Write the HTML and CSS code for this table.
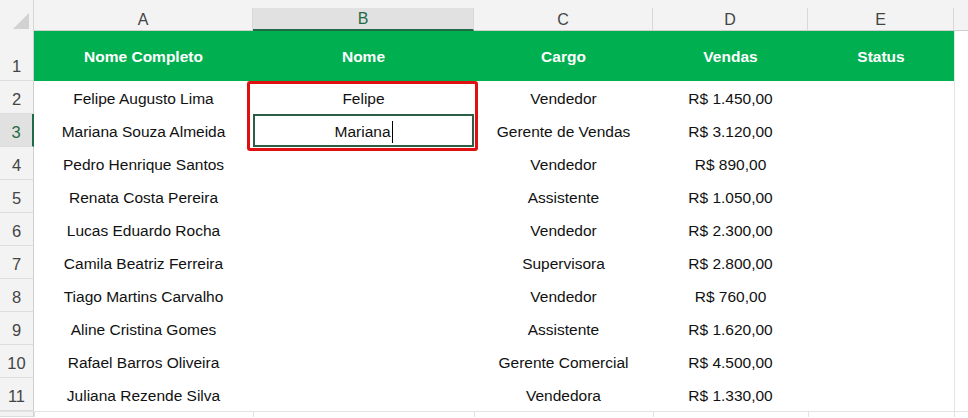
FILE: index.html
```html
<!DOCTYPE html>
<html lang="pt-BR">
<head>
<meta charset="utf-8">
<title>Planilha</title>
<link rel="stylesheet" href="styles.css">
</head>
<body>
<div class="sheet">
  <div class="row colhead">
    <div class="corner"><span class="tri"></span></div>
    <div class="ch">A</div>
    <div class="ch sel">B</div>
    <div class="ch">C</div>
    <div class="ch">D</div>
    <div class="ch">E</div>
    <div class="ch last"></div>
  </div>

  <div class="row r-title">
    <div class="rh">1</div>
    <div class="c th">Nome Completo</div>
    <div class="c th">Nome</div>
    <div class="c th">Cargo</div>
    <div class="c th">Vendas</div>
    <div class="c th">Status</div>
    <div class="c out"></div>
  </div>

  <div class="row">
    <div class="rh">2</div>
    <div class="c">Felipe Augusto Lima</div>
    <div class="c">Felipe</div>
    <div class="c">Vendedor</div>
    <div class="c">R$ 1.450,00</div>
    <div class="c"></div>
    <div class="c out"></div>
  </div>
  <div class="row">
    <div class="rh rsel">3</div>
    <div class="c">Mariana Souza Almeida</div>
    <div class="c active">Mariana<span class="caret"></span></div>
    <div class="c">Gerente de Vendas</div>
    <div class="c">R$ 3.120,00</div>
    <div class="c"></div>
    <div class="c out"></div>
  </div>
  <div class="row">
    <div class="rh">4</div>
    <div class="c">Pedro Henrique Santos</div>
    <div class="c"></div>
    <div class="c">Vendedor</div>
    <div class="c">R$ 890,00</div>
    <div class="c"></div>
    <div class="c out"></div>
  </div>
  <div class="row">
    <div class="rh">5</div>
    <div class="c">Renata Costa Pereira</div>
    <div class="c"></div>
    <div class="c">Assistente</div>
    <div class="c">R$ 1.050,00</div>
    <div class="c"></div>
    <div class="c out"></div>
  </div>
  <div class="row">
    <div class="rh">6</div>
    <div class="c">Lucas Eduardo Rocha</div>
    <div class="c"></div>
    <div class="c">Vendedor</div>
    <div class="c">R$ 2.300,00</div>
    <div class="c"></div>
    <div class="c out"></div>
  </div>
  <div class="row">
    <div class="rh">7</div>
    <div class="c">Camila Beatriz Ferreira</div>
    <div class="c"></div>
    <div class="c">Supervisora</div>
    <div class="c">R$ 2.800,00</div>
    <div class="c"></div>
    <div class="c out"></div>
  </div>
  <div class="row">
    <div class="rh">8</div>
    <div class="c">Tiago Martins Carvalho</div>
    <div class="c"></div>
    <div class="c">Vendedor</div>
    <div class="c">R$ 760,00</div>
    <div class="c"></div>
    <div class="c out"></div>
  </div>
  <div class="row">
    <div class="rh">9</div>
    <div class="c">Aline Cristina Gomes</div>
    <div class="c"></div>
    <div class="c">Assistente</div>
    <div class="c">R$ 1.620,00</div>
    <div class="c"></div>
    <div class="c out"></div>
  </div>
  <div class="row">
    <div class="rh">10</div>
    <div class="c">Rafael Barros Oliveira</div>
    <div class="c"></div>
    <div class="c">Gerente Comercial</div>
    <div class="c">R$ 4.500,00</div>
    <div class="c"></div>
    <div class="c out"></div>
  </div>
  <div class="row">
    <div class="rh">11</div>
    <div class="c">Juliana Rezende Silva</div>
    <div class="c"></div>
    <div class="c">Vendedora</div>
    <div class="c">R$ 1.330,00</div>
    <div class="c"></div>
    <div class="c out"></div>
  </div>
  <div class="row r-empty">
    <div class="rh"></div>
    <div class="c out"></div>
    <div class="c out"></div>
    <div class="c out"></div>
    <div class="c out"></div>
    <div class="c out"></div>
    <div class="c out"></div>
  </div>

  <div class="highlight"></div>
</div>
</body>
</html>
```

FILE: styles.css
```css
* { box-sizing: border-box; }

html, body {
  margin: 0;
  padding: 0;
  background: #ffffff;
}

body {
  width: 968px;
  height: 418px;
  overflow: hidden;
  font-family: "Liberation Sans", Arial, sans-serif;
  font-size: 15.5px;
  color: #111111;
}

.sheet {
  position: relative;
  width: 968px;
  height: 418px;
  overflow: hidden;
}

.row {
  display: grid;
  grid-template-columns: 34px 219px 221px 179px 155px 146px 1fr;
  height: 33px;
}

/* column headers */
.colhead {
  height: 31px;
  background: #f3f3f3;
  padding-top: 8px;
  align-items: stretch;
}

.corner {
  position: relative;
  margin-top: -8px;
  border-right: 1px solid #d6d6d6;
}

.tri {
  position: absolute;
  left: 13px;
  top: 13px;
  width: 16px;
  height: 16px;
  background: #d2d2d2;
  clip-path: polygon(100% 0, 100% 100%, 0 100%);
}

.ch {
  display: flex;
  align-items: center;
  justify-content: center;
  border-right: 1px solid #d8d8d8;
  border-bottom: 1px solid #cfcfcf;
  color: #444444;
  font-size: 16px;
  padding-top: 1px;
}

.ch.sel {
  background: #e1e1e1;
  color: #1f6b45;
  border-bottom: 2px solid #1f6b45;
}

.ch.last {
  border-right: none;
}

/* row headers */
.rh {
  background: #f3f3f3;
  border-right: 1px solid #cfcfcf;
  border-bottom: 1px solid #dddddd;
  display: flex;
  align-items: flex-end;
  justify-content: center;
  padding-bottom: 4px;
  font-size: 16.5px;
  color: #444444;
}

.rh.rsel {
  background: #e1e1e1;
  color: #1f6b45;
  border-right: 2px solid #1f6b45;
}

/* cells */
.c {
  display: flex;
  align-items: center;
  justify-content: center;
  padding-top: 2px;
  white-space: nowrap;
  position: relative;
}

.c.out {
  border-left: 1px solid #e3e3e3;
}

.r-title {
  height: 50px;
}

.r-title .th {
  background: #00b050;
  color: #ffffff;
  font-weight: bold;
  padding-top: 2px;
}

.r-empty {
  height: 6px;
  border-top: 1px solid #e3e3e3;
}

.c.active {
  box-shadow: inset 0 0 0 2px #2b5e45;
}

.caret {
  display: inline-block;
  width: 1px;
  height: 22px;
  background: #000000;
  margin-left: 1px;
  margin-top: 1px;
}

/* red annotation box over B2:B3 */
.highlight {
  position: absolute;
  left: 247px;
  top: 81px;
  width: 231px;
  height: 70px;
  border: 3px solid #e01010;
  border-radius: 3px;
  pointer-events: none;
}
```
